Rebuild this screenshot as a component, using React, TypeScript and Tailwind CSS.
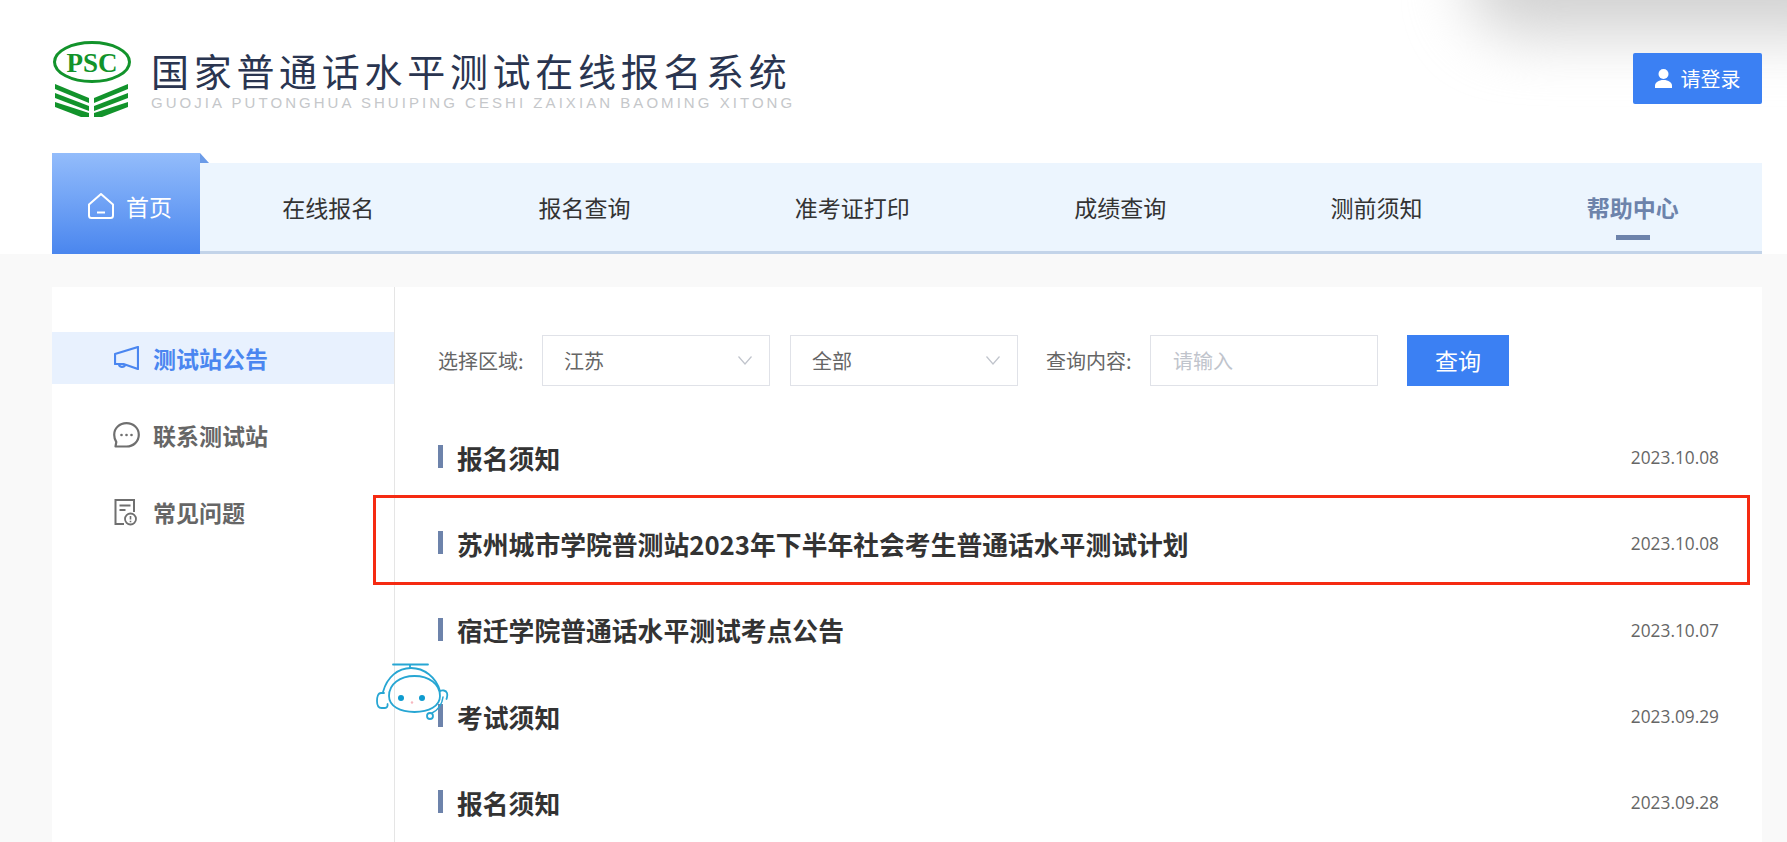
const navItems = ['在线报名', '报名查询', '准考证打印', '成绩查询', '测前须知'];

const notices = [
  { title: '报名须知', date: '2023.10.08' },
  { title: '苏州城市学院普测站2023年下半年社会考生普通话水平测试计划', date: '2023.10.08' },
  { title: '宿迁学院普通话水平测试考点公告', date: '2023.10.07' },
  { title: '考试须知', date: '2023.09.29' },
  { title: '报名须知', date: '2023.09.28' },
];

function Logo() {
  return (
    <svg width="80" height="76" viewBox="0 0 80 76" className="shrink-0">
      <ellipse cx="40" cy="21" rx="37.500" ry="19.500" fill="none" stroke="#12932b" strokeWidth="3" />
      <text x="40" y="30.500" textAnchor="middle" fontFamily="Liberation Serif" fontWeight="700" fontSize="27" fill="#12932b">
        PSC
      </text>
      <g fill="#12932b">
        <polygon points="3,43 37,57 37,62 3,48" />
        <polygon points="3,52 37,65 37,70 3,57" />
        <polygon points="3,61 37,72 37,76 29,76 3,66" />
        <polygon points="76,43 42,57 42,62 76,48" />
        <polygon points="76,52 42,65 42,70 76,57" />
        <polygon points="76,61 42,72 42,76 50,76 76,66" />
      </g>
    </svg>
  );
}

function UserIcon() {
  return (
    <svg width="17" height="19" viewBox="0 0 17 19" fill="#fff" className="shrink-0">
      <circle cx="8.500" cy="5" r="5" />
      <path d="M0 19v-2.500C0 13.500 3.500 11 8.500 11S17 13.500 17 16.500V19Z" />
    </svg>
  );
}

function HomeIcon() {
  return (
    <svg width="26" height="26" viewBox="0 0 26 26" fill="none" stroke="#fff" strokeWidth="2" className="shrink-0">
      <path d="M1 11.500 13 1 25 11.500V22.500a2.500 2.500 0 0 1-2.500 2.500H3.500a2.500 2.500 0 0 1-2.500-2.500Z" strokeLinejoin="round" />
      <path d="M9 19.500h8" />
    </svg>
  );
}

function MegaphoneIcon() {
  return (
    <svg width="25" height="24" viewBox="0 0 25 24" fill="none" stroke="#4a86f0" strokeWidth="2.200" strokeLinejoin="round" className="shrink-0">
      <path d="M24 1v22L9.500 18H1V8Z" />
      <path d="M5 18c0 3.500 5 4 6.500.500" />
    </svg>
  );
}

function ChatIcon() {
  return (
    <svg width="27" height="26" viewBox="0 0 27 26" fill="none" className="shrink-0">
      <path d="M13.500 1.200C20.500 1.200 25.800 6.300 25.800 12.800S20.500 24.500 13.500 24.500H2.500L3.300 20C1.900 18 1.200 15.500 1.200 12.800 1.200 6.300 6.500 1.200 13.500 1.200Z" stroke="#6f6f6f" strokeWidth="2.200" strokeLinejoin="round" />
      <circle cx="8.500" cy="13" r="1.300" fill="#6f6f6f" />
      <circle cx="13.500" cy="13" r="1.300" fill="#6f6f6f" />
      <circle cx="18.500" cy="13" r="1.300" fill="#6f6f6f" />
    </svg>
  );
}

function FaqIcon() {
  return (
    <svg width="23" height="27" viewBox="0 0 23 27" fill="none" stroke="#6f6f6f" className="shrink-0">
      <path d="M10 25H1.500V1H20V13" strokeWidth="2" />
      <path d="M5.500 6.500h11M5.500 11h6" strokeWidth="1.800" />
      <circle cx="16.500" cy="20" r="5.500" strokeWidth="1.800" />
      <path d="M16.500 17v3.500M16.500 21.800v1.400" strokeWidth="1.600" />
    </svg>
  );
}

function Chevron() {
  return (
    <svg width="14" height="9" viewBox="0 0 14 9" fill="none" stroke="#c0c4cc" strokeWidth="1.200">
      <path d="M.5.500 7 8 13.500.500" />
    </svg>
  );
}

function Robot() {
  return (
    <svg width="74" height="60" viewBox="0 0 74 60" fill="none" stroke="#27a6d3" strokeWidth="1.800" strokeLinecap="round">
      <path d="M17 1.500h35M34 2v3" />
      <path d="M7 29C11 14 22 5 35 5s25 9 29 23" />
      <path d="M13 33c0-12 11-20 25.500-20S64 21 64 33c0 10-11 16-25.500 16S13 43 13 33Z" />
      <path d="M8 30H5c-3 0-4 4-4 8s1.500 7 4.500 7H9c2 0 3-2 2.500-4" />
      <path d="M64 28c2-1 6-1 7 2s0 4-.5 6" />
      <path d="M67 34c-1 8-5 13-11 16" strokeWidth="1.500" />
      <circle cx="54" cy="53" r="3" />
      <circle cx="25" cy="35" r="3" fill="#0e9bcf" stroke="none" />
      <circle cx="46" cy="35" r="3" fill="#0e9bcf" stroke="none" />
      <circle cx="36" cy="39.500" r="1.200" fill="#f7b7bf" stroke="none" />
    </svg>
  );
}

export default function App() {
  return (
    <div className="relative flex h-[842px] flex-col overflow-hidden bg-white font-['Noto_Sans_CJK_SC','Noto_Sans',sans-serif] text-[#333]">
      <div className="absolute right-[-100px] top-[-75px] h-[110px] w-[420px] rounded-full bg-[#d2d2d2] blur-[30px]" />

      <header className="relative h-[254px] shrink-0 pl-[52px] pr-[25px]">
        <div className="flex h-[153px] items-start justify-between">
          <div className="mt-[41px] flex">
            <Logo />
            <div className="ml-[19px] mt-[6px]">
              <div className="text-[38px] leading-[46px] tracking-[4.700px] text-[#2a3550] whitespace-nowrap">国家普通话水平测试在线报名系统</div>
              <div className="mt-[2px] font-['Liberation_Sans',sans-serif] text-[15px] leading-[16px] tracking-[3.050px] text-[#c5c7ca] whitespace-nowrap">
                GUOJIA PUTONGHUA SHUIPING CESHI ZAIXIAN BAOMING XITONG
              </div>
            </div>
          </div>
          <button className="mt-[53px] flex h-[51px] w-[129px] items-center justify-center gap-[9px] rounded-[2px] bg-[#3b80f3] text-[20px] text-white">
            <UserIcon />
            <span>请登录</span>
          </button>
        </div>

        <nav className="flex h-[101px] items-end">
          <div className="relative z-10 flex h-[101px] w-[148px] shrink-0 items-center justify-center gap-[12px] bg-gradient-to-b from-[#93bcfb] to-[#4a86ee] pt-[5px] pl-[8px] text-[23px] text-white">
            <HomeIcon />
            <span>首页</span>
            <div className="absolute left-full top-0 h-0 w-0 border-b-[10px] border-r-[9px] border-b-[#6b9be8] border-r-transparent" />
          </div>
          <div className="flex h-[91px] flex-1 items-center justify-around border-b-[3px] border-b-[#c3d4e9] bg-[#ecf5fe] pr-[1px] text-[23px] text-[#333]">
            {navItems.map((item) => (
              <span key={item}>{item}</span>
            ))}
            <span className="relative font-bold text-[#6d83ab]">
              帮助中心
              <span className="absolute left-1/2 top-[45px] h-[5px] w-[34px] -translate-x-1/2 bg-[#6d83ab]" />
            </span>
          </div>
        </nav>
      </header>

      <main className="flex-1 bg-[#f9f9f9] pl-[52px] pr-[25px] pt-[33px]">
        <div className="flex h-full bg-white">
          <aside className="w-[343px] shrink-0 border-r border-r-[#e5e5e5] pt-[45px] text-[23px] font-bold text-[#666]">
            <div className="flex h-[52px] items-center gap-[14px] bg-[#e8f1fe] pl-[62px] text-[#4a86f0]">
              <MegaphoneIcon />
              <span>测试站公告</span>
            </div>
            <div className="mt-[25px] flex h-[52px] items-center gap-[13px] pl-[61px]">
              <ChatIcon />
              <span>联系测试站</span>
            </div>
            <div className="mt-[25px] flex h-[52px] items-center gap-[16px] pl-[62px]">
              <FaqIcon />
              <span>常见问题</span>
            </div>
          </aside>

          <section className="flex-1 pl-[43px] pr-[43px] pt-[48px]">
            <div className="flex h-[51px] items-center text-[20px] text-[#666]">
              <span className="w-[104px] shrink-0">选择区域:</span>
              <div className="flex h-[51px] w-[228px] items-center justify-between border border-[#e0e2e8] pl-[21px] pr-[17px]">
                <span>江苏</span>
                <Chevron />
              </div>
              <div className="ml-[20px] flex h-[51px] w-[228px] items-center justify-between border border-[#e0e2e8] pl-[21px] pr-[17px]">
                <span>全部</span>
                <Chevron />
              </div>
              <span className="ml-[28px] w-[104px] shrink-0">查询内容:</span>
              <input
                placeholder="请输入"
                className="h-[51px] w-[228px] border border-[#e0e2e8] pl-[22px] outline-none placeholder:text-[#c0c4cc]"
              />
              <button className="ml-[29px] h-[51px] w-[102px] bg-[#3b80f3] text-[23px] text-white">查询</button>
            </div>

            <div className="mt-[29px]">
              {notices.map((n, i) => (
                <div key={i} className="flex h-[86.250px] items-center justify-between">
                  <div className="flex items-center gap-[14px]">
                    <span className="mt-[-3px] h-[23px] w-[5px] bg-[#6d83ab]" />
                    <span className="text-[25.800px] font-bold text-[#333]">{n.title}</span>
                  </div>
                  <span className="font-['Open_Sans',sans-serif] text-[17.300px] text-[#666]">{n.date}</span>
                </div>
              ))}
            </div>
          </section>
        </div>
      </main>

      <div className="absolute left-[373px] top-[495px] h-[90px] w-[1377px] border-[3px] border-[#f52a12]" />
      <div className="absolute left-[376px] top-[663px]">
        <Robot />
      </div>
    </div>
  );
}
